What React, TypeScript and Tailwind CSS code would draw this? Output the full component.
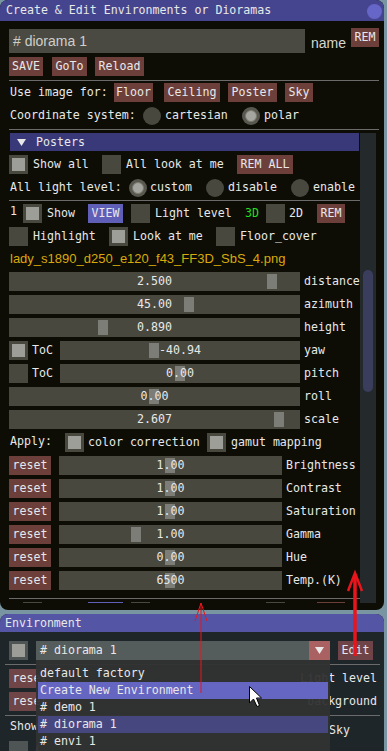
import React from "react";

const SANS = "font-['Liberation_Sans',Arial,sans-serif]";

function Check({ on = false, dark = false }: { on?: boolean; dark?: boolean }) {
  return (
    <div
      className={`w-[19px] h-[19px] shrink-0 flex items-center justify-center ${
        dark ? "bg-[#4f5555]" : "bg-[#48483f]"
      }`}
    >
      {on && <div className="w-[13px] h-[13px] bg-[#9e9e98]" />}
    </div>
  );
}

function Radio({ on = false }: { on?: boolean }) {
  return (
    <div
      className={`w-[18px] h-[18px] shrink-0 rounded-full flex items-center justify-center ${
        on ? "bg-[#58584f]" : "bg-[#48483f]"
      }`}
    >
      {on && <div className="w-[12px] h-[12px] rounded-full bg-[#a6a6a0] border border-[#7a7a72]" />}
    </div>
  );
}

function Btn({ className, children }: { className: string; children?: React.ReactNode }) {
  return (
    <div className={`h-[19px] shrink-0 flex items-center justify-center leading-[19px] ${className}`}>
      {children}
    </div>
  );
}

function Slider({ w, grab, value }: { w: string; grab: string; value: string }) {
  return (
    <div className={`relative h-[19px] shrink-0 bg-[#48483f] ${w}`}>
      <div className={`absolute top-[2px] bottom-[2px] w-[10px] bg-[#7d7d77] ${grab}`} />
      <div className="relative text-center leading-[19px]">{value}</div>
    </div>
  );
}

function Down({ className }: { className: string }) {
  return (
    <svg width="9" height="7" viewBox="0 0 9 7" className={className}>
      <polygon points="0,0 9,0 4.5,7" fill="#e8e8e8" />
    </svg>
  );
}

function PosterRow() {
  return (
    <div className="flex items-center h-[19px] shrink-0">
      <span className="w-[14px] pl-[1px] self-start leading-[15px]">1</span>
      <Check on />
      <span className="w-[46px] pl-[5px]">Show</span>
      <Btn className="w-[35px] bg-[#5f5fb8]">VIEW</Btn>
      <span className="w-[8px]" />
      <Check />
      <span className="w-[95px] pl-[5px]">Light level</span>
      <span className="w-[21px] text-[#22de22]">3D</span>
      <Check />
      <span className="w-[32px] pl-[4px]">2D</span>
      <Btn className="w-[28px] bg-[#6c3f3b]">REM</Btn>
    </div>
  );
}

// next poster row, only its top edge shows under the clip
function ClippedRow() {
  return (
    <div className="flex items-start h-[19px] shrink-0">
      <span className="w-[14px]" />
      <Check />
      <span className="w-[46px]" />
      <Btn className="w-[35px] bg-[#5f5fb8]" />
      <span className="w-[8px]" />
      <Check />
      <span className="w-[116px]" />
      <Check />
      <span className="w-[32px]" />
      <Btn className="w-[28px] bg-[#6c3f3b]" />
    </div>
  );
}

function ResetRow({ value, grab, label }: { value: string; grab: string; label: string }) {
  return (
    <div className="flex items-center h-[19px] mt-[4px] shrink-0">
      <Btn className="w-[42px] bg-[#6c3f3b]">reset</Btn>
      <span className="w-[8px]" />
      <Slider w="w-[223px]" grab={grab} value={value} />
      <span className="pl-[4px]">{label}</span>
    </div>
  );
}

export default function App() {
  return (
    <div className="relative w-[387px] h-[751px] overflow-hidden bg-[#7895a1] font-['DejaVu_Sans_Mono',monospace] text-[11.6px] text-[#e8e8e8] whitespace-pre flex flex-col">
      {/* main editor window */}
      <div className="w-[384px] h-[610px] shrink-0 rounded-[8px] bg-[#0d0d06] overflow-hidden flex flex-col">
        <div className="h-[21px] shrink-0 bg-[#45458f] flex items-center pl-[6px] pr-[2px]">
          <span className="leading-[21px]">Create &amp; Edit Environments or Dioramas</span>
          <div className="ml-auto mt-[2px] w-[15px] h-[15px] rounded-full bg-[#6666c8]" />
        </div>

        <div className="pl-[9px] pr-[5px] flex flex-col">
          <div className="flex items-start mt-[7px] h-[25px]">
            <div className={`mt-[1px] w-[296px] h-[24px] bg-[#4a4a43] pl-[4px] ${SANS} text-[14px] leading-[24px] text-[#cfcfc7]`}>
              # diorama 1
            </div>
            <span className={`w-[46px] pl-[6px] mt-[3px] ${SANS} text-[14px] leading-[24px] text-[#d6d6ce]`}>name</span>
            <Btn className="w-[28px] bg-[#6c3f3b]">REM</Btn>
          </div>

          <div className="flex items-center mt-[4px] h-[19px]">
            <Btn className="w-[34px] bg-[#6c3f3b]">SAVE</Btn>
            <span className="w-[9px]" />
            <Btn className="w-[35px] bg-[#6c3f3b]">GoTo</Btn>
            <span className="w-[8px]" />
            <Btn className="w-[49px] bg-[#6c3f3b]">Reload</Btn>
          </div>

          <div className="mt-[4px] h-px bg-[#6b6b6b]" />

          <div className="flex items-center mt-[2px] h-[19px]">
            <span className="w-[105px] pl-[1px]">Use image for:</span>
            <Btn className="w-[39px] bg-[#6c3f3b]">Floor</Btn>
            <span className="w-[11px]" />
            <Btn className="w-[56px] bg-[#6c3f3b]">Ceiling</Btn>
            <span className="w-[8px]" />
            <Btn className="w-[49px] bg-[#6c3f3b]">Poster</Btn>
            <span className="w-[8px]" />
            <Btn className="w-[28px] bg-[#6c3f3b]">Sky</Btn>
          </div>

          <div className="flex items-center mt-[4px] h-[19px]">
            <span className="w-[134px] pl-[1px]">Coordinate system:</span>
            <Radio />
            <span className="w-[81px] pl-[4px]">cartesian</span>
            <Radio on />
            <span className="pl-[4px]">polar</span>
          </div>

          <div className="mt-[4px] h-px bg-[#6b6b6b]" />

          {/* scrolling posters region */}
          <div className="mt-[3px] h-[470px] flex">
            <div className="w-[351px] h-full overflow-hidden flex flex-col">
              <div className="ml-[1px] w-[349px] h-[18px] shrink-0 bg-[#39397a] flex items-center">
                <Down className="ml-[7px] shrink-0" />
                <span className="ml-[10px] leading-[18px]">Posters</span>
              </div>

              <div className="flex items-center h-[19px] mt-[4px] shrink-0">
                <Check on />
                <span className="w-[74px] pl-[5px]">Show all</span>
                <Check />
                <span className="w-[116px] pl-[5px]">All look at me</span>
                <Btn className="w-[56px] bg-[#6c3f3b]">REM ALL</Btn>
              </div>

              <div className="flex items-center h-[19px] mt-[4px] shrink-0">
                <span className="w-[120px] pl-[1px]">All light level:</span>
                <Radio on />
                <span className="w-[59px] pl-[3px]">custom</span>
                <Radio />
                <span className="w-[67px] pl-[4px]">disable</span>
                <Radio />
                <span className="pl-[4px]">enable</span>
              </div>

              <div className="mt-[3px] h-px shrink-0 bg-[#6b6b6b]" />

              <div className="mt-[3px]">
                <PosterRow />
              </div>

              <div className="flex items-center h-[19px] mt-[4px] shrink-0">
                <Check />
                <span className="w-[81px] pl-[5px]">Highlight</span>
                <Check on />
                <span className="w-[88px] pl-[5px]">Look at me</span>
                <Check />
                <span className="pl-[5px]">Floor_cover</span>
              </div>

              <div className={`mt-[4px] h-[18px] shrink-0 pl-[1px] ${SANS} text-[13px] leading-[18px] text-[#d9a90b]`}>
                lady_s1890_d250_e120_f43_FF3D_SbS_4.png
              </div>

              <div className="flex items-center h-[19px] mt-[4px] shrink-0">
                <Slider w="w-[291px]" grab="left-[258px]" value="2.500" />
                <span className="pl-[4px]">distance</span>
              </div>
              <div className="flex items-center h-[19px] mt-[4px] shrink-0">
                <Slider w="w-[291px]" grab="left-[175px]" value="45.00" />
                <span className="pl-[4px]">azimuth</span>
              </div>
              <div className="flex items-center h-[19px] mt-[4px] shrink-0">
                <Slider w="w-[291px]" grab="left-[89px]" value="0.890" />
                <span className="pl-[4px]">height</span>
              </div>
              <div className="flex items-center h-[19px] mt-[4px] shrink-0">
                <Check on />
                <span className="w-[32px] pl-[4px]">ToC</span>
                <Slider w="w-[240px]" grab="left-[89px]" value="-40.94" />
                <span className="pl-[4px]">yaw</span>
              </div>
              <div className="flex items-center h-[19px] mt-[4px] shrink-0">
                <Check />
                <span className="w-[32px] pl-[4px]">ToC</span>
                <Slider w="w-[240px]" grab="left-[115px]" value="0.00" />
                <span className="pl-[4px]">pitch</span>
              </div>
              <div className="flex items-center h-[19px] mt-[4px] shrink-0">
                <Slider w="w-[291px]" grab="left-[140px]" value="0.00" />
                <span className="pl-[4px]">roll</span>
              </div>
              <div className="flex items-center h-[19px] mt-[4px] shrink-0">
                <Slider w="w-[291px]" grab="left-[265px]" value="2.607" />
                <span className="pl-[4px]">scale</span>
              </div>

              <div className="flex items-center h-[19px] mt-[4px] shrink-0">
                <span className="w-[56px] pl-[1px] self-start leading-[17px]">Apply:</span>
                <Check on />
                <span className="w-[123px] pl-[4px]">color correction</span>
                <Check on />
                <span className="pl-[5px]">gamut mapping</span>
              </div>

              <ResetRow value="1.00" grab="left-[106px]" label="Brightness" />
              <ResetRow value="1.00" grab="left-[106px]" label="Contrast" />
              <ResetRow value="1.00" grab="left-[106px]" label="Saturation" />
              <ResetRow value="1.00" grab="left-[72px]" label="Gamma" />
              <ResetRow value="0.00" grab="left-[106px]" label="Hue" />
              <ResetRow value="6500" grab="left-[106px]" label="Temp.(K)" />

              <div className="mt-[8px] h-px shrink-0 bg-[#6b6b6b]" />
              <div className="mt-[3px]">
                <ClippedRow />
              </div>
            </div>

            <div className="relative w-[16px] h-full bg-[#24292c]">
              <div className="absolute left-[3px] top-[137px] w-[10px] h-[122px] rounded-[5px] bg-[#3a3d5c]" />
            </div>
          </div>
        </div>
      </div>

      {/* environment window */}
      <div className="mt-[4px] w-[384px] h-[137px] shrink-0 rounded-t-[8px] bg-[#1f262a] overflow-hidden flex flex-col">
        <div className="h-[18px] shrink-0 bg-[#5555a5] pl-[5px] leading-[18px]">Environment</div>
        <div className="pl-[9px] pr-[7px] flex flex-col">
          <div className="flex items-center h-[19px] mt-[9px]">
            <Check on dark />
            <span className="w-[8px]" />
            <div className="w-[294px] h-[19px] bg-[#545c5c] flex items-center">
              <span className="flex-1 pl-[4px] leading-[19px]"># diorama 1</span>
              <div className="w-[21px] h-[19px] bg-[#a96161] flex items-center justify-center">
                <Down className="" />
              </div>
            </div>
            <span className="w-[8px]" />
            <Btn className="w-[35px] bg-[#6f4448]">Edit</Btn>
          </div>

          <div className="mt-[4px] -ml-[4px] w-[375px] h-px bg-[#6b6b6b]" />

          <div className="flex items-center h-[19px] mt-[4px]">
            <Btn className="w-[42px] bg-[#6f4547]">reset</Btn>
            <span className="ml-auto">Light level</span>
          </div>
          <div className="flex items-center h-[19px] mt-[4px]">
            <Btn className="w-[42px] bg-[#6f4547]">reset</Btn>
            <span className="ml-auto">background</span>
          </div>

          <div className="mt-[4px] -ml-[4px] w-[375px] h-px bg-[#6b6b6b]" />

          <div className="flex items-start h-[19px] mt-[3px]">
            <span className="w-[29px] pl-[1px] leading-[15px]">Show</span>
            <span className="ml-[291px] mt-[2px] leading-[19px]">Sky</span>
          </div>
          <div className="flex items-center h-[19px] mt-[3px]">
            <Check dark />
            <span className="pl-[6px]">(</span>
          </div>
        </div>
      </div>

      {/* combo popup */}
      <div className="absolute left-[36px] top-[660px] w-[294px] h-[91px] bg-[#313131]/95 pt-[5px] px-[2px] flex flex-col">
        <div className="h-[17px] pl-[2px] leading-[17px]">default factory</div>
        <div className="h-[17px] pl-[2px] leading-[17px] bg-[#6565c2]">Create New Environment</div>
        <div className="h-[17px] pl-[2px] leading-[17px]"># demo 1</div>
        <div className="h-[17px] pl-[2px] leading-[17px] bg-[#47477f]"># diorama 1</div>
        <div className="h-[17px] pl-[2px] leading-[17px]"># envi 1</div>
      </div>

      {/* annotations and mouse pointer */}
      <svg className="absolute left-0 top-0 pointer-events-none" width="387" height="751" viewBox="0 0 387 751">
        <path d="M201 693 V603 M201 603 L195 621 M201 603 L207 621" stroke="#e8161c" strokeWidth="1" fill="none" />
        <path d="M355 656 V575" stroke="#e8161c" strokeWidth="3.5" fill="none" />
        <path d="M348 591 L355 573 L362 591" stroke="#e8161c" strokeWidth="2.5" fill="none" />
        <path
          d="M249.5 686.5 L249.5 703 L253.5 699 L257 706.5 L259.5 705.5 L256.5 698 L261.5 698 Z"
          fill="#ffffff"
          stroke="#000000"
          strokeWidth="1"
        />
      </svg>
    </div>
  );
}
